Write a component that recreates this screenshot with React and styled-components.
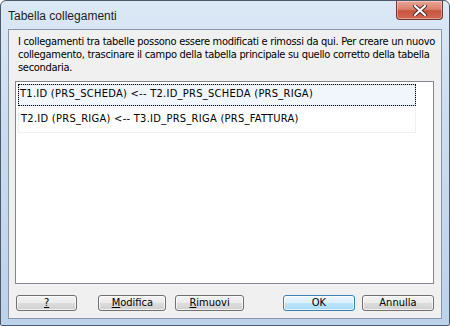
import React from "react";
import styled, { createGlobalStyle } from "styled-components";

const GlobalStyle = createGlobalStyle`
  html, body {
    margin: 0;
    padding: 0;
    background: #ffffff;
  }
  body {
    font-family: "DejaVu Sans Condensed", "DejaVu Sans", sans-serif;
    font-stretch: condensed;
  }
`;

const Window = styled.div`
  width: 450px;
  height: 326px;
  box-sizing: border-box;
  border: 1px solid #4d5a6a;
  border-radius: 6px 6px 2px 2px;
  background: linear-gradient(180deg, #dbe8f6 0%, #cbdcf0 40%, #bcd2eb 100%);
  display: flex;
  flex-direction: column;
  overflow: hidden;
`;

const TitleBar = styled.div`
  height: 28px;
  display: flex;
  align-items: flex-start;
  justify-content: space-between;
  padding-left: 7px;
`;

const Title = styled.div`
  font-family: "Liberation Sans", Arial, sans-serif;
  font-stretch: normal;
  font-size: 12px;
  color: #1e1e1e;
  margin-top: 8px;
`;

const CloseButton = styled.div`
  width: 45px;
  height: 18px;
  margin-right: 6px;
  border: 1px solid #6b3a34;
  border-top: none;
  border-radius: 0 0 4px 4px;
  background: linear-gradient(180deg, #e8a597 0%, #d9826f 45%, #c7543f 55%, #d36a54 100%);
  box-shadow: inset 0 0 0 1px rgba(255, 255, 255, 0.35);
  display: flex;
  align-items: center;
  justify-content: center;
`;

const Client = styled.div`
  flex: 1;
  margin: 0 7px 6px 7px;
  border: 1px solid #8796a9;
  background: #f0f0f0;
  display: flex;
  flex-direction: column;
  padding: 5px 7px 7px 6px;
  font-size: 11px;
  color: #000;
`;

const Intro = styled.p`
  margin: 0 0 0 3px;
  line-height: 13px;
  letter-spacing: -0.3px;
  white-space: nowrap;
`;

const List = styled.div`
  margin-top: 7px;
  height: 203px;
  box-sizing: border-box;
  border: 1px solid #828790;
  background: #ffffff;
  padding: 1px 17px 0 2px;
  display: flex;
  flex-direction: column;
`;

const Row = styled.div`
  box-sizing: border-box;
  height: ${(p) => (p.$selected ? "22px" : "26px")};
  margin-top: 1px;
  padding: ${(p) => (p.$selected ? "2px 1px" : "4px 2px")};
  line-height: 13px;
  letter-spacing: 0.28px;
  white-space: nowrap;
  border: 1px solid ${(p) => (p.$selected ? "#b8d0ee" : "#f0f0f0")};
  background: ${(p) => (p.$selected ? "#f1f6fd" : "#ffffff")};
  outline: ${(p) => (p.$selected ? "1px dotted #000" : "none")};
  outline-offset: -1px;
`;

const ButtonBar = styled.div`
  margin-top: auto;
  display: flex;
  align-items: center;
`;

const Button = styled.button`
  box-sizing: border-box;
  width: ${(p) => p.$w || 69}px;
  height: 16px;
  margin-left: ${(p) => p.$gap || 0}px;
  padding: 0;
  font-family: "DejaVu Sans Condensed", "DejaVu Sans", sans-serif;
  font-stretch: condensed;
  font-size: 11px;
  line-height: 12px;
  color: #000;
  border: 1px solid ${(p) => (p.$default ? "#3c7fb1" : "#707070")};
  border-radius: 3px;
  background: ${(p) =>
    p.$default
      ? "linear-gradient(180deg, #eaf6fd 0%, #d9f0fc 50%, #bee6fd 51%, #a7d9f5 100%)"
      : "linear-gradient(180deg, #f2f2f2 0%, #ebebeb 50%, #dddddd 51%, #cfcfcf 100%)"};
  box-shadow: inset 0 0 0 1px rgba(255, 255, 255, 0.7);
  u {
    text-decoration: underline;
  }
`;

const CloseIcon = () => (
  <svg width="14" height="11" viewBox="0 0 14 11">
    <path
      d="M2 1 L12 10 M12 1 L2 10"
      stroke="#4a2a26"
      strokeWidth="4"
      strokeLinecap="round"
    />
    <path
      d="M2 1 L12 10 M12 1 L2 10"
      stroke="#ffffff"
      strokeWidth="2.2"
      strokeLinecap="round"
    />
  </svg>
);

const links = [
  "T1.ID (PRS_SCHEDA) <-- T2.ID_PRS_SCHEDA (PRS_RIGA)",
  "T2.ID (PRS_RIGA) <-- T3.ID_PRS_RIGA (PRS_FATTURA)",
];

const App = () => {
  return (
    <>
      <GlobalStyle />
      <Window>
        <TitleBar>
          <Title>Tabella collegamenti</Title>
          <CloseButton>
            <CloseIcon />
          </CloseButton>
        </TitleBar>
        <Client>
          <Intro>
            I collegamenti tra tabelle possono essere modificati e rimossi da qui. Per creare un nuovo
            <br />
            collegamento, trascinare il campo della tabella principale su quello corretto della tabella
            <br />
            secondaria.
          </Intro>
          <List>
            {links.map((link, i) => (
              <Row key={link} $selected={i === 0}>
                {link}
              </Row>
            ))}
          </List>
          <ButtonBar>
            <Button $w={62} $gap={1}>
              <u>?</u>
            </Button>
            <Button $gap={21}>
              <u>M</u>odifica
            </Button>
            <Button $gap={9}>
              <u>R</u>imuovi
            </Button>
            <Button $w={73} $gap={39} $default>
              OK
            </Button>
            <Button $w={73} $gap={7}>
              Annulla
            </Button>
          </ButtonBar>
        </Client>
      </Window>
    </>
  );
};

export default App;
